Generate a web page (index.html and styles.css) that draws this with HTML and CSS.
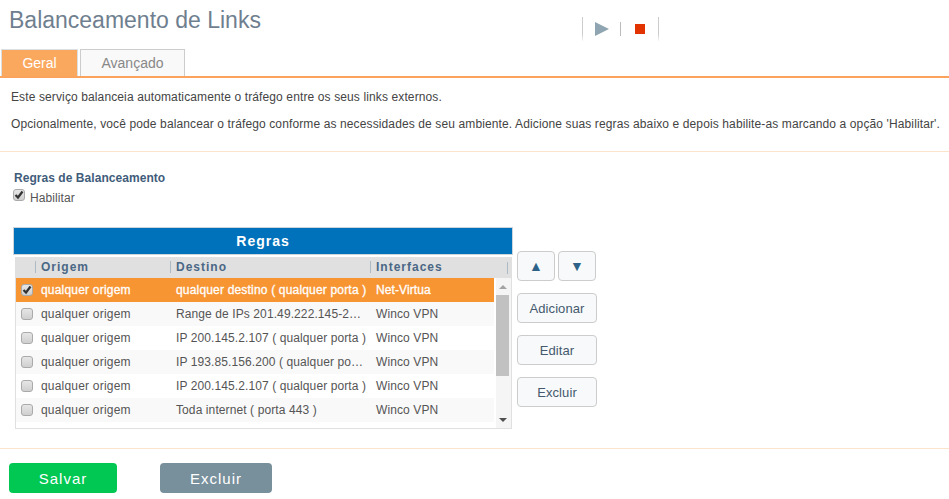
FILE: index.html
```html
<!DOCTYPE html>
<html lang="en">
<head>
    <meta charset="UTF-8">
    <meta name="viewport" content="width=device-width, initial-scale=1.0">
    <title>Balanceamento de Links</title>
    <link rel="stylesheet" href="styles.css">
</head>
<body>
    <div class="top">
        <h1>Balanceamento de Links</h1>
        <div class="controls">
            <div class="ctrl">
                <svg width="14" height="14" viewBox="0 0 14 14"><path d="M0 0L14 7L0 14Z" fill="#8fa5b1"/></svg>
            </div>
            <div class="sep"></div>
            <div class="ctrl">
                <span class="stop"></span>
            </div>
        </div>
    </div>

    <div class="tabs">
        <div class="tab active">Geral</div>
        <div class="tab">Avançado</div>
    </div>

    <div class="intro">
        <p>Este serviço balanceia automaticamente o tráfego entre os seus links externos.</p>
        <p>Opcionalmente, você pode balancear o tráfego conforme as necessidades de seu ambiente. Adicione suas regras abaixo e depois habilite-as marcando a opção 'Habilitar'.</p>
    </div>

    <div class="section">
        <div class="section-title">Regras de Balanceamento</div>
        <label class="enable">
            <span class="check on"><svg width="10" height="10" viewBox="0 0 10 10"><path d="M1.5 5L4 7.5L8.5 1.5" fill="none" stroke="#333" stroke-width="2.2"/></svg></span>
            Habilitar
        </label>
    </div>

    <div class="rules">
        <div class="grid">
            <div class="grid-title">Regras</div>
            <div class="grid-box">
                <div class="grid-head">
                    <div class="col-check"></div>
                    <div class="col-origin"><span>Origem</span></div>
                    <div class="col-dest"><span>Destino</span></div>
                    <div class="col-iface"><span>Interfaces</span></div>
                    <div class="col-end"><span></span></div>
                </div>
                <div class="grid-body">
                    <div class="rows">
                        <div class="row selected">
                            <div class="col-check"><span class="check on"><svg width="10" height="10" viewBox="0 0 10 10"><path d="M1.5 5L4 7.5L8.5 1.5" fill="none" stroke="#333" stroke-width="2.2"/></svg></span></div>
                            <div class="col-origin">qualquer origem</div>
                            <div class="col-dest">qualquer destino ( qualquer porta )</div>
                            <div class="col-iface">Net-Virtua</div>
                        </div>
                        <div class="row">
                            <div class="col-check"><span class="check"></span></div>
                            <div class="col-origin">qualquer origem</div>
                            <div class="col-dest">Range de IPs 201.49.222.145-2…</div>
                            <div class="col-iface">Winco VPN</div>
                        </div>
                        <div class="row">
                            <div class="col-check"><span class="check"></span></div>
                            <div class="col-origin">qualquer origem</div>
                            <div class="col-dest">IP 200.145.2.107 ( qualquer porta )</div>
                            <div class="col-iface">Winco VPN</div>
                        </div>
                        <div class="row">
                            <div class="col-check"><span class="check"></span></div>
                            <div class="col-origin">qualquer origem</div>
                            <div class="col-dest">IP 193.85.156.200 ( qualquer po…</div>
                            <div class="col-iface">Winco VPN</div>
                        </div>
                        <div class="row">
                            <div class="col-check"><span class="check"></span></div>
                            <div class="col-origin">qualquer origem</div>
                            <div class="col-dest">IP 200.145.2.107 ( qualquer porta )</div>
                            <div class="col-iface">Winco VPN</div>
                        </div>
                        <div class="row">
                            <div class="col-check"><span class="check"></span></div>
                            <div class="col-origin">qualquer origem</div>
                            <div class="col-dest">Toda internet ( porta 443 )</div>
                            <div class="col-iface">Winco VPN</div>
                        </div>
                        <div class="row">
                            <div class="col-check"><span class="check"></span></div>
                            <div class="col-origin"></div>
                            <div class="col-dest"></div>
                            <div class="col-iface"></div>
                        </div>
                    </div>
                    <div class="scrollbar">
                        <div class="arrow-up"></div>
                        <div class="track"><div class="thumb"></div></div>
                        <div class="arrow-down"></div>
                    </div>
                </div>
            </div>
        </div>

        <div class="side">
            <div class="move">
                <button class="btn small">▲</button>
                <button class="btn small">▼</button>
            </div>
            <button class="btn">Adicionar</button>
            <button class="btn">Editar</button>
            <button class="btn">Excluir</button>
        </div>
    </div>

    <div class="footer">
        <button class="action save">Salvar</button>
        <button class="action remove">Excluir</button>
    </div>
</body>
</html>
```

FILE: styles.css
```css
body {
    font-family: "Liberation Sans", Arial, sans-serif;
    font-size: 12px;
    color: #555;
    margin: 0;
    background-color: #fff;
    overflow: hidden;
}
.top {
    display: flex;
    height: 49px;
}
h1 {
    font-size: 23px;
    font-weight: normal;
    color: #6f7f8f;
    margin: 0;
    padding: 7px 0 0 9px;
    line-height: 26px;
    width: 573px;
}
.controls {
    display: flex;
    align-items: center;
    margin-top: 17px;
    height: 24px;
    border-left: 1px solid transparent;
    border-right: 1px solid transparent;
    border-image: linear-gradient(#ccc 70%, #fff) 1;
}
.ctrl {
    width: 37px;
    height: 24px;
    display: flex;
    align-items: center;
    justify-content: center;
}
.sep {
    width: 1px;
    height: 14px;
    background-color: #bbb;
}
.stop {
    width: 10px;
    height: 10px;
    background-color: #e23400;
}
.tabs {
    display: flex;
    gap: 2px;
    padding-left: 1px;
    border-bottom: 2px solid #fba35c;
}
.tab {
    box-sizing: border-box;
    height: 27px;
    width: 105px;
    border: 1px solid #ccc;
    border-bottom: 0;
    background-color: #f9f9f9;
    color: #888;
    font-size: 14px;
    line-height: 27px;
    text-align: center;
}
.tab.active {
    width: 77px;
    background-color: #fba85f;
    border-color: #d9dfe3;
    color: #fff;
}
.intro {
    height: 73px;
    padding-left: 11px;
    border-bottom: 1px solid #fbe3cc;
    color: #444;
    letter-spacing: 0.12px;
}
.intro p {
    margin: 0;
    padding-top: 12px;
    line-height: 15px;
}
.section {
    padding: 19px 0 0 14px;
    height: 56px;
}
.section-title {
    font-weight: bold;
    color: #3f5c7a;
    line-height: 15px;
    letter-spacing: 0.05px;
}
.enable {
    display: flex;
    align-items: flex-start;
    gap: 5px;
    margin: 5px 0 0 -1px;
    line-height: 15px;
    letter-spacing: 0.1px;
}
.enable .check {
    margin-top: -2px;
}
.check {
    box-sizing: border-box;
    display: flex;
    align-items: center;
    justify-content: center;
    flex: none;
    width: 12px;
    height: 12px;
    border: 1px solid #aaa;
    border-radius: 3px;
    background: linear-gradient(#e6e6e6, #cfcfcf);
}
.rules {
    display: flex;
    padding-left: 13px;
    height: 202px;
}
.grid {
    width: 500px;
}
.grid-title {
    box-sizing: border-box;
    height: 28px;
    background-color: #0072bc;
    border: 1px solid #ccd5dd;
    color: #fff;
    font-size: 14px;
    font-weight: bold;
    letter-spacing: 1px;
    line-height: 26px;
    text-align: center;
}
.grid-box {
    box-sizing: border-box;
    margin: 2px 1px 0 2px;
    height: 172px;
    border: 1px solid #e0e0e0;
    border-top: 0;
}
.grid-head {
    display: flex;
    height: 21px;
    background-color: #e0e0e0;
    color: #4a6785;
    font-weight: bold;
    letter-spacing: 1px;
    line-height: 21px;
}
.grid-head span {
    border-left: 1px solid #aebbc5;
    padding-left: 5px;
    display: inline-block;
    line-height: 12px;
    margin-left: -6px;
}
.col-check {
    width: 25px;
    flex: none;
    box-sizing: border-box;
}
.col-origin {
    width: 135px;
    flex: none;
}
.col-dest {
    width: 200px;
    flex: none;
    white-space: nowrap;
}
.col-iface {
    width: 119px;
    flex: none;
}
.col-end {
    flex: 1;
    display: flex;
    align-items: center;
    justify-content: flex-end;
    padding-right: 3px;
}
.grid-head .col-end span {
    height: 12px;
    margin: 0;
    padding: 0;
}
.grid-body {
    display: flex;
    height: 150px;
    overflow: hidden;
}
.rows {
    width: 478px;
}
.row {
    display: flex;
    height: 24px;
    line-height: 24px;
    background-color: #fff;
    color: #555;
    letter-spacing: 0.1px;
}
.row .col-origin {
    letter-spacing: 0.2px;
}
.row:nth-child(even) {
    background-color: #f9f9f9;
}
.row .col-check {
    display: flex;
    align-items: center;
    padding-left: 5px;
}
.row .check {
    margin-top: -1px;
}
.row.selected {
    background-color: #f89533;
    color: #fff;
    -webkit-text-stroke: 0.3px #fff;
}
.row.selected .col-dest {
    letter-spacing: 0.18px;
}
.scrollbar {
    width: 15px;
    margin-left: 2px;
    display: flex;
    flex-direction: column;
    align-items: flex-start;
    background-color: #f5f5f5;
}
.arrow-up,
.arrow-down {
    width: 0;
    height: 0;
    border-left: 4px solid transparent;
    border-right: 4px solid transparent;
    margin: 6px 0 6px 3px;
}
.arrow-up {
    margin-top: 7px;
    border-bottom: 4px solid #a3a3a3;
}
.arrow-down {
    border-top: 4px solid #505050;
}
.track {
    flex: 1;
    width: 13px;
}
.thumb {
    height: 81px;
    background-color: #c1c1c1;
}
.side {
    display: flex;
    flex-direction: column;
    align-items: flex-start;
    gap: 12px;
    padding: 24px 0 0 4px;
}
.move {
    display: flex;
    gap: 3px;
}
.btn {
    box-sizing: border-box;
    width: 80px;
    height: 30px;
    border: 1px solid #ccc;
    border-radius: 4px;
    background-color: #f8f9fa;
    color: #44596e;
    font-family: inherit;
    font-size: 13px;
    letter-spacing: 0.1px;
    padding: 0;
}
.btn.small {
    width: 38px;
    color: #2e6288;
    font-size: 14px;
}
.footer {
    display: flex;
    gap: 43px;
    margin-top: 19px;
    padding: 14px 0 0 9px;
    border-top: 1px solid #fbe3cc;
}
.action {
    height: 30px;
    width: 108px;
    border: 0;
    border-radius: 4px;
    color: #fff;
    font-family: inherit;
    font-size: 15px;
    letter-spacing: 1px;
    padding: 0;
}
.save {
    background-color: #00c853;
}
.remove {
    width: 112px;
    background-color: #78909c;
}
```
